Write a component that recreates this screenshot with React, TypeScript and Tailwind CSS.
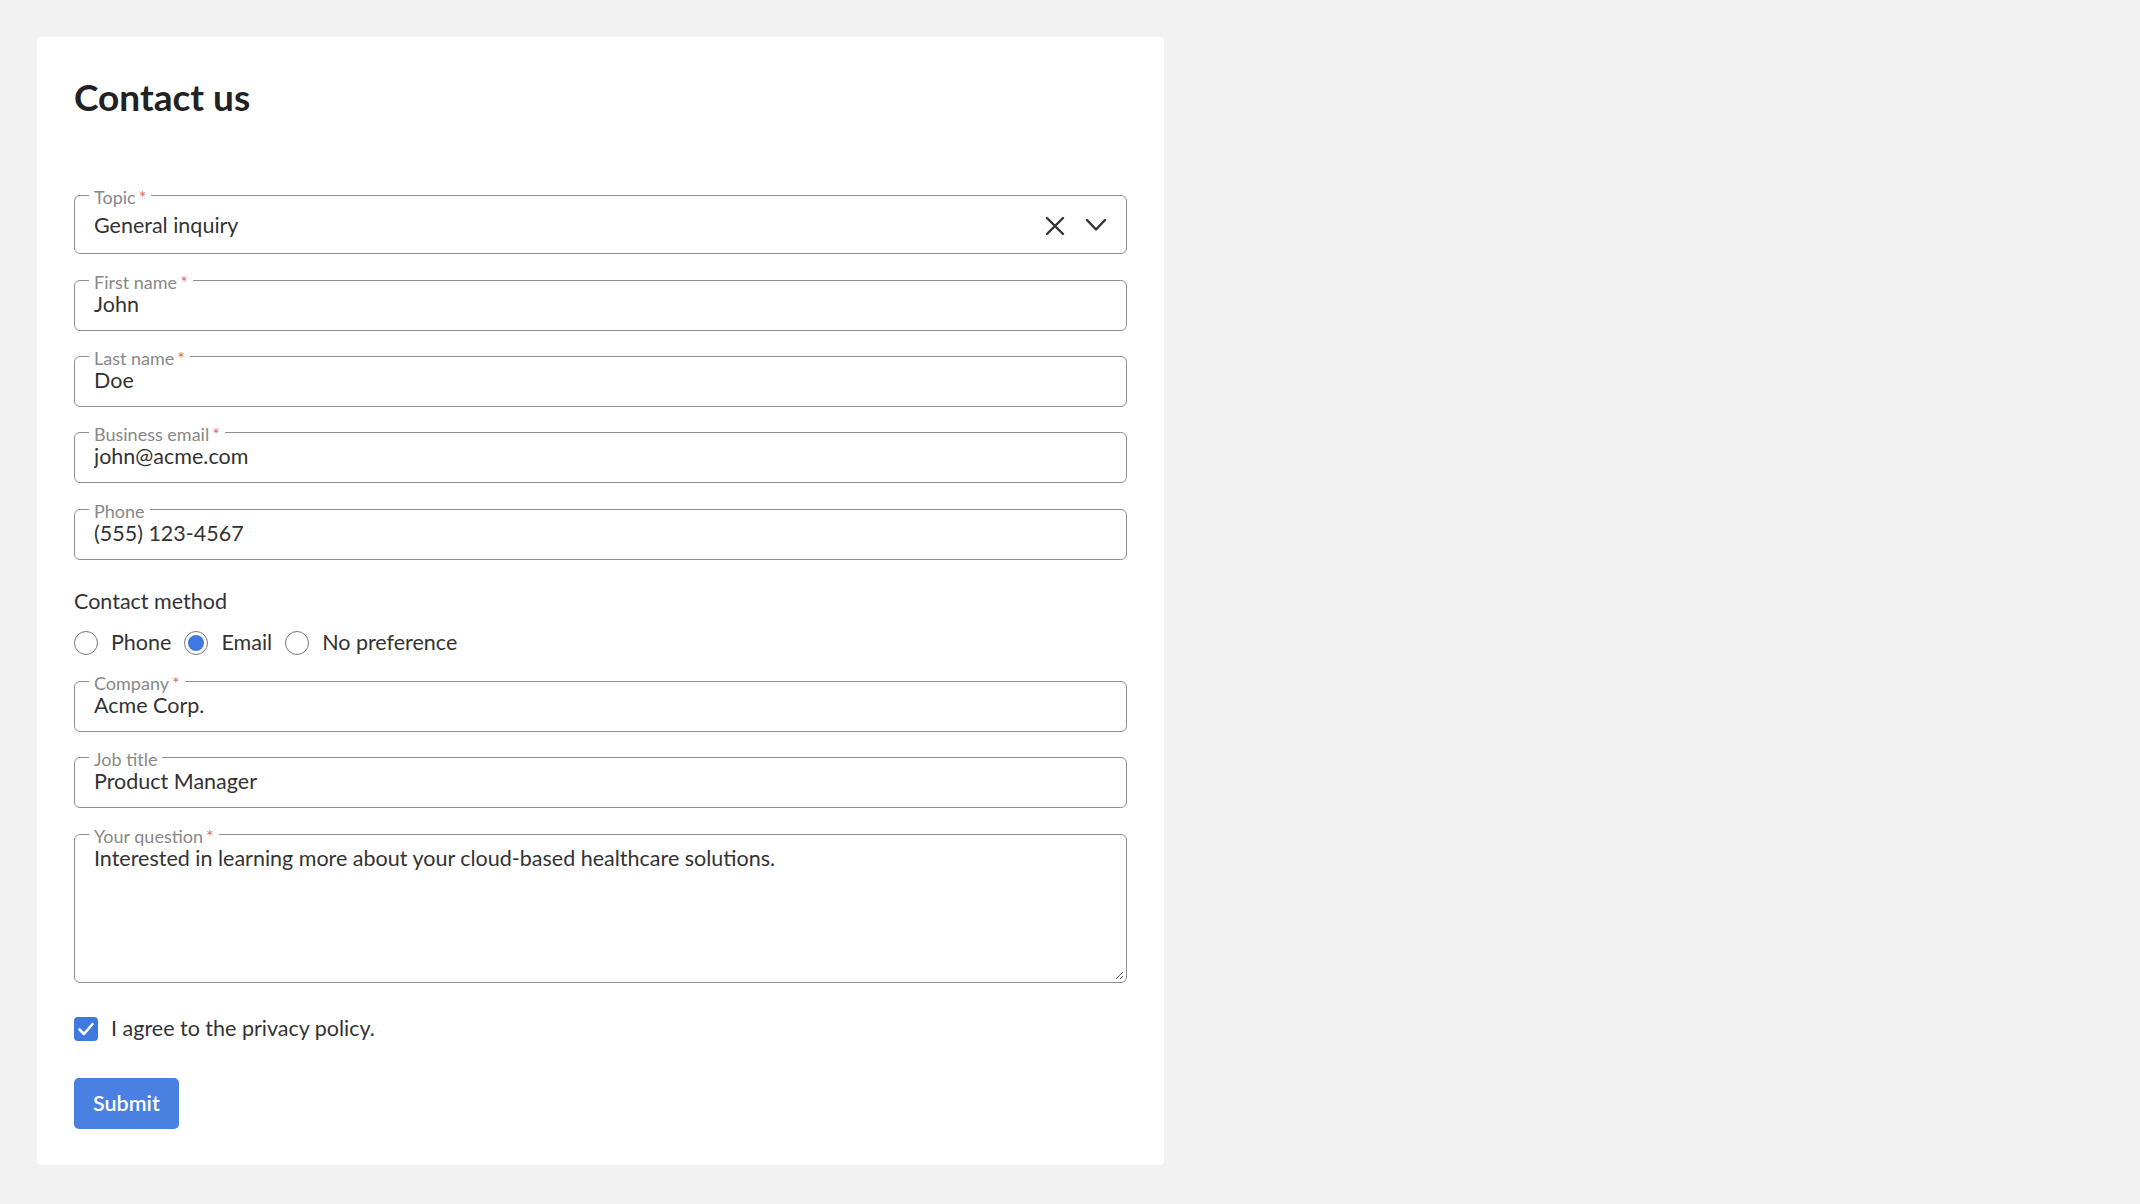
import React from "react";

function Req() {
  return <span className="ml-[3px] text-[#e06c64]">*</span>;
}

function Legend({ label, required }: { label: string; required?: boolean }) {
  return (
    <legend className="px-[5px] pt-[3px] text-[18px] leading-[20px] text-[#888]">
      {label}
      {required && <Req />}
    </legend>
  );
}

function Field({
  label,
  required,
  value,
  mt,
}: {
  label: string;
  required?: boolean;
  value: string;
  mt: string;
}) {
  return (
    <fieldset className={`${mt} rounded-[6px] border border-[#8f8f8f] px-[14px] pb-[13px]`}>
      <Legend label={label} required={required} />
      <input
        readOnly
        defaultValue={value}
        className="block h-[25px] w-full bg-transparent px-[5px] text-[21.5px] leading-[25px] text-[#333] outline-none"
      />
    </fieldset>
  );
}

function Radio({ checked, label }: { checked?: boolean; label: string }) {
  return (
    <label className="flex items-center gap-[13px]">
      <span className="flex h-[24px] w-[24px] items-center justify-center rounded-full border-[1.5px] border-[#777]">
        {checked && <span className="h-[16px] w-[16px] rounded-full bg-[#3f79e0]" />}
      </span>
      <span className="text-[21.5px] leading-[25px] text-[#333]">{label}</span>
    </label>
  );
}

export default function App() {
  return (
    <div className="min-h-screen w-full bg-[#f2f2f2] p-[37px] font-['Lato',sans-serif]">
      <div className="w-[1127px] rounded-[4px] bg-white px-[37px] pb-[36px] pt-[37px]">
        <h1 className="mt-[1px] text-[37px] font-bold leading-[44px] text-[#222]">Contact us</h1>

        {/* Topic select */}
        <fieldset className="mt-[65px] rounded-[6px] border border-[#8f8f8f] px-[14px] pb-[13px]">
          <Legend label="Topic" required />
          <div className="flex h-[33px] items-start px-[5px] pt-[6px]">
            <div className="flex-1 text-[21.5px] leading-[25px] text-[#333]">General inquiry</div>
            <div className="flex h-[25px] items-center gap-[20px]">
              <svg width="20" height="20" viewBox="0 0 20 20" className="text-[#333]">
                <path d="M2 2 L18 18 M18 2 L2 18" stroke="currentColor" strokeWidth="2.4" strokeLinecap="round" fill="none" />
              </svg>
              <svg width="22" height="14" viewBox="0 0 22 14" className="-mt-[2px] text-[#333]">
                <path d="M2 2 L11 11.5 L20 2" stroke="currentColor" strokeWidth="2.4" strokeLinecap="round" strokeLinejoin="round" fill="none" />
              </svg>
            </div>
          </div>
        </fieldset>

        <Field mt="mt-[15px]" label="First name" required value="John" />
        <Field mt="mt-[14px]" label="Last name" required value="Doe" />
        <Field mt="mt-[14px]" label="Business email" required value="john@acme.com" />
        <Field mt="mt-[15px]" label="Phone" value="(555) 123-4567" />

        <div className="mt-[29px] text-[21.5px] leading-[25px] text-[#333]">Contact method</div>
        <div className="mt-[16px] flex items-center gap-[13px]">
          <Radio label="Phone" />
          <Radio label="Email" checked />
          <Radio label="No preference" />
        </div>

        <Field mt="mt-[15px]" label="Company" required value="Acme Corp." />
        <Field mt="mt-[14px]" label="Job title" value="Product Manager" />

        <fieldset className="mt-[15px] rounded-[6px] border border-[#8f8f8f] pb-[2px] pl-[14px] pr-[2px]">
          <Legend label="Your question" required />
          <textarea
            readOnly
            spellCheck={false}
            defaultValue="Interested in learning more about your cloud-based healthcare solutions."
            className="block h-[134px] w-full resize-y bg-transparent pl-[5px] pr-[12px] text-[21.5px] leading-[25px] text-[#333] outline-none"
          />
        </fieldset>

        <label className="mt-[33px] flex items-center gap-[13px]">
          <span className="flex h-[24px] w-[24px] items-center justify-center rounded-[4px] bg-[#3f79e0]">
            <svg width="20" height="20" viewBox="0 0 20 20">
              <path d="M3.5 10.5 L8 15 L16.5 5" stroke="white" strokeWidth="2.6" strokeLinecap="round" strokeLinejoin="round" fill="none" />
            </svg>
          </span>
          <span className="text-[21.5px] leading-[25px] text-[#333]">I agree to the privacy policy.</span>
        </label>

        <button className="mt-[37px] flex h-[51px] items-center rounded-[5px] bg-[#4a80e2] px-[19px] text-[21.5px] font-semibold text-white">
          Submit
        </button>
      </div>
    </div>
  );
}
